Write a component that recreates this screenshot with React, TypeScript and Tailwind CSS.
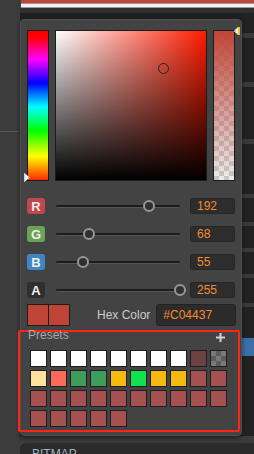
import React from "react";

const RED = "#c04437";

const presets: string[] = [
  "#ffffff", "#ffffff", "#ffffff", "#ffffff", "#ffffff", "#ffffff", "#ffffff", "#ffffff", "#6b4141", "checker",
  "#ffe29b", "#fd6a5a", "#3e9d5a", "#3e9d5a", "#f6b910", "#0fe24d", "#f6b910", "#f6b910", "#a55151", "#a55151",
  "#a55151", "#a55151", "#a55151", "#a55151", "#a55151", "#a55151", "#a55151", "#a55151", "#a55151", "#a55151",
  "#a55151", "#a55151", "#a55151", "#a55151", "#a55151",
];

const channels = [
  { l: "R", v: 192, bg: "bg-[#c0474d]" },
  { l: "G", v: 68, bg: "bg-[#6aa353]" },
  { l: "B", v: 55, bg: "bg-[#3f86c6]" },
  { l: "A", v: 255, bg: "bg-[#2f2f2f]" },
];

function Row({ l, v, bg }: { l: string; v: number; bg: string }) {
  return (
    <div className="flex h-[16px] items-center">
      <div className={`flex h-[16px] w-[18px] items-center justify-center rounded-[3px] ${bg} text-[13px] font-bold leading-none text-[#eeeeee]`}>
        {l}
      </div>
      <div className="relative ml-[11px] h-[16px] w-[124px]">
        <div className="absolute left-0 right-0 top-[7px] h-[2px] rounded-full bg-[#1c1c1c]" />
        <div className="absolute left-[1px] right-[1px] top-[9px] h-[1px] bg-[#555555]" />
        <div
          className="absolute top-[2px] h-[12px] w-[12px] rounded-full border-2 border-[#979797] bg-[#303030]"
          style={{ left: (v / 255) * 124 - 6 }}
        />
      </div>
      <div className="ml-[10px] flex h-[16px] w-[45px] items-center rounded-[2px] border border-[#272727] bg-[#2d2d2d] pl-[6px] text-[12px] leading-none text-[#f78a2c]">
        {v}
      </div>
    </div>
  );
}

export default function App() {
  const stripe = [20, 5, 44, 5, 52, 5, 50, 4, 24, 4, 22, 4, 22, 4, 25, 4, 31, 18, 80];
  return (
    <div className="relative h-[454px] w-[254px] overflow-hidden bg-[#3c3c3c] font-['Liberation_Sans',sans-serif]">
      {/* background */}
      <div className="flex h-full">
        <div className="w-[20px] flex-none">
          <div className="h-[131px]" />
          <div className="h-[1px] w-[18px] bg-[#575757]" />
        </div>
        <div className="flex flex-1 flex-col">
          <div className="ml-[1px] h-[3px] bg-[#c04437]" />
          <div className="ml-[1px] h-[5px] border-y border-[#9a9a9a] bg-[#f0f0f0]" />
          <div className="h-[6px] bg-[#2f2f2f]" />
          <div className="flex flex-1">
            <div className="flex-1 bg-[#1f1f1f]" />
            <div className="flex w-[12px] flex-col">
              {stripe.map((h, i) => (
                <div
                  key={i}
                  className={i === 17 ? "bg-[#3b6fa8]" : i % 2 === 0 ? "bg-[#222222]" : "bg-[#3a3a3a]"}
                  style={{ height: h }}
                />
              ))}
            </div>
          </div>
          <div className="h-[7px] bg-[#3c3c3c]" />
          <div className="h-[11px] rounded-tl-[6px] bg-[#2b2b2b] pl-[12px] pt-[5px] text-[12px] leading-[12px] text-[#9fb2c6]">
            BITMAP
          </div>
        </div>
      </div>

      {/* popup */}
      <div className="absolute left-[20px] top-[19px] h-[417px] w-[222px] rounded-[4px] border border-[#4f4f4f] bg-[#434343] shadow-[0_2px_4px_rgba(0,0,0,0.5)]">
        <div className="flex flex-col pl-[6px] pt-[10px]">
          <div className="relative flex h-[151px] gap-[6px]">
            <div className="h-[151px] w-[22px] border border-[#1b1b1b] bg-[linear-gradient(to_bottom,#ff0000_0%,#ff0000_4%,#ff00ff_19%,#0000ff_35%,#00ffff_51%,#00ff00_67%,#ffff00_84%,#ff2a00_100%)]" />
            <div className="relative h-[151px] w-[152px] border border-[#1b1b1b] bg-[linear-gradient(to_right,#ffffff,#ff1b00)]">
              <div className="absolute inset-0 bg-[linear-gradient(to_top,#000000,rgba(0,0,0,0))]" />
              <div className="absolute left-[102px] top-[32px] h-[11px] w-[11px] rounded-full border-[1.5px] border-[#222222]" />
            </div>
            <div className="h-[151px] w-[22px] border border-[#1b1b1b] bg-[repeating-conic-gradient(#c9c9c9_0%_25%,#ececec_0%_50%)] bg-[length:10px_10px]">
              <div className="h-full w-full bg-[linear-gradient(to_bottom,#c04437,rgba(192,68,55,0))]" />
            </div>
            {/* hue marker */}
            <svg className="absolute left-[-3px] top-[143px]" width="6" height="9" viewBox="0 0 6 9">
              <polygon points="0,0 6,4.5 0,9" fill="#ffffff" />
              <polygon points="0,0 1.5,1 1.5,8 0,9" fill="#bcd6ee" />
              <polygon points="4,3.2 6,4.5 4,5.8" fill="#f0a030" />
            </svg>
            {/* alpha marker */}
            <svg className="absolute left-[207px] top-[-3px]" width="6" height="8" viewBox="0 0 6 8">
              <polygon points="4,0 0,4 4,8" fill="#e8f0ff" />
              <polygon points="2,2 0,4 2,6" fill="#a8c8ec" />
              <rect x="4" y="0" width="2" height="8" fill="#f4c020" />
            </svg>
          </div>

          <div className="mt-[17px] flex flex-col gap-[12px]">
            {channels.map((c) => (
              <Row key={c.l} {...c} />
            ))}
          </div>

          <div className="mt-[6px] flex h-[22px] items-center">
            <div className="flex h-[22px] w-[43px] border border-[#1c1c1c]">
              <div className="h-full w-[21px] border-r border-[#1c1c1c] bg-[#c04437]" />
              <div className="h-full flex-1 bg-[#c04437]" />
            </div>
            <div className="ml-[27px] text-[12px] leading-none text-[#cccccc]">Hex Color</div>
            <div className="ml-[6px] flex h-[22px] w-[80px] items-center rounded-[3px] border border-[#222222] bg-[#2b2b2b] pl-[6px] text-[12px] leading-none text-[#f78a2c]">
              #C04437
            </div>
          </div>

          <div className="ml-[-9px] mt-[4px] h-[102px] w-[222px] rounded-[2px] border-2 border-[#ff2416]">
            <div className="mt-[-3px] flex h-[12px] items-center justify-between pl-[8px] pr-[13px]">
              <span className="text-[12px] leading-[12px] text-[#a9a9a9]">Presets</span>
              <svg width="9" height="9" viewBox="0 0 9 9" className="mt-[5px]">
                <rect x="3.5" y="0" width="2" height="9" fill="#cfd3d8" />
                <rect x="0" y="3.5" width="9" height="2" fill="#cfd3d8" />
              </svg>
            </div>
            <div className="ml-[10px] mt-[9px] grid grid-cols-[repeat(10,17px)] gap-[3px]">
              {presets.map((c, i) =>
                c === "checker" ? (
                  <div
                    key={i}
                    className="h-[17px] w-[17px] border border-[#1e1e1e] bg-[repeating-conic-gradient(#5c5c5c_0%_25%,#7a7a7a_0%_50%)] bg-[length:10px_10px]"
                  />
                ) : (
                  <div key={i} className="h-[17px] w-[17px] border border-[#1e1e1e]" style={{ backgroundColor: c }} />
                )
              )}
            </div>
          </div>
        </div>
      </div>
    </div>
  );
}
